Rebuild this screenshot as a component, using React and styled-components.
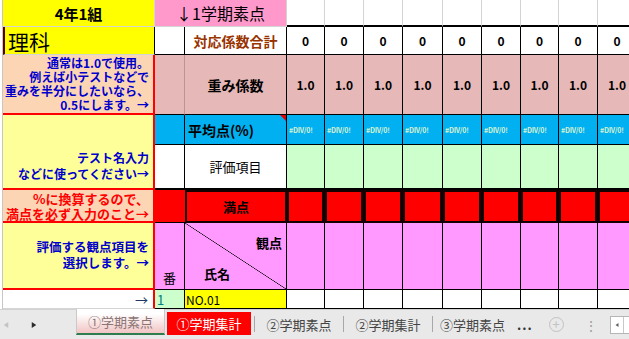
import React from 'react';
import styled, { createGlobalStyle } from 'styled-components';

const dataCols = [38, 39, 39, 40, 39, 39, 38, 39, 39];
const GRID = '#D4D4D4';

const GlobalStyle = createGlobalStyle`
  body {
    margin: 0;
    background: #fff;
    font-family: "Noto Sans CJK JP", "Noto Sans", sans-serif;
  }
`;

const Window = styled.div`
  width: 629px;
  height: 339px;
  overflow: hidden;
  display: flex;
  flex-direction: column;
`;

const Sheet = styled.div`
  display: grid;
  grid-template-columns: 3px 152px 30px 102px ${dataCols.map((w) => `${w}px`).join(' ')};
  grid-template-rows: 27px 28px 60px 30px 45px 33px 67px 19px;
  height: 309px;
  overflow: hidden;
  flex-shrink: 0;
`;

const Strip = styled.div`
  grid-row: span 8;
  border-right: 1px solid #c6c6c6;
  background: #fff;
`;

const Cell = styled.div`
  box-sizing: border-box;
  position: relative;
  display: flex;
  align-items: ${(p) => p.$v || 'center'};
  justify-content: ${(p) => p.$h || 'center'};
  padding: ${(p) => p.$pad || '0'};
  background: ${(p) => p.$bg || '#fff'};
  color: ${(p) => p.$color || '#000'};
  font-size: ${(p) => p.$fs || 12}px;
  font-weight: ${(p) => (p.$bold ? 700 : 400)};
  border-right: ${(p) => p.$r || '1px solid #000'};
  border-bottom: ${(p) => p.$b || '1px solid #000'};
  border-left: ${(p) => p.$l || 'none'};
  grid-column: ${(p) => (p.$cs ? `span ${p.$cs}` : 'auto')};
  grid-row: ${(p) => (p.$rs ? `span ${p.$rs}` : 'auto')};
  white-space: nowrap;
  overflow: hidden;
`;

const Note = styled(Cell)`
  flex-direction: column;
  align-items: flex-end;
  justify-content: ${(p) => p.$v || 'center'};
  text-align: right;
  font-weight: 700;
  line-height: ${(p) => p.$lh || 14}px;
  padding: ${(p) => p.$pad || '0 4px 0 0'};
`;

const Line = styled.span`
  display: block;
  height: 1lh;
`;

const Avg = styled(Cell)`
  &::after {
    content: '';
    position: absolute;
    top: 0;
    right: 0;
    border-top: 6px solid #e00000;
    border-left: 6px solid transparent;
  }
`;

const DivErr = styled(Cell)`
  font-size: 7px;
  color: #d8f0d0;
  letter-spacing: -0.2px;
`;

const Full = styled(Cell)`
  box-shadow: inset 0 0 0 2px #140000;
`;

const Corner = styled(Cell)`
  flex-direction: column;
  align-items: stretch;
  justify-content: space-between;
  padding: 12px 4px 7px 19px;
  background: linear-gradient(
      to top right,
      transparent calc(50% - 0.6px),
      #000 50%,
      transparent calc(50% + 0.6px)
    ),
    #ff99ff;
`;

const CornerText = styled.span`
  font-weight: 700;
  font-size: 13px;
  line-height: 16px;
  align-self: ${(p) => p.$side};
`;

const TabBar = styled.div`
  box-sizing: border-box;
  flex: 1;
  display: flex;
  align-items: stretch;
  background: #e9e9e9;
  border-top: 1px solid #d2d2d2;
  font-size: 13px;
  color: #444;
`;

const Nav = styled.div`
  width: 76px;
  display: flex;
  align-items: center;
  gap: 22px;
  padding-left: 3px;
  box-sizing: border-box;
`;

const SheetTab = styled.div`
  box-sizing: border-box;
  width: ${(p) => p.$w}px;
  display: flex;
  align-items: center;
  justify-content: center;
  white-space: nowrap;
`;

const ActiveTab = styled(SheetTab)`
  margin: -1px 0 4px;
  background: linear-gradient(#ffffff 20%, #f2c4c4);
  border: 1px solid #c9c9c9;
  border-top: none;
  border-bottom: 2px solid #2e7d4f;
  color: #8a7474;
`;

const RedTab = styled(SheetTab)`
  margin: 2px 0 4px 2px;
  background: #ff0000;
  color: #fff;
`;

const Sep = styled.div`
  width: 1px;
  margin: 6px 0 7px;
  background: #a8a8a8;
`;

const More = styled.div`
  display: flex;
  align-items: center;
  margin-left: 5px;
  font-weight: 700;
  color: #333;
  letter-spacing: 1px;
`;

const AddBtn = styled.div`
  align-self: center;
  margin-left: 16px;
  width: 13px;
  height: 13px;
  border: 1px solid #c2c2c2;
  border-radius: 50%;
  color: #c2c2c2;
  font-size: 13px;
  line-height: 12px;
  text-align: center;
`;

const VDots = styled.div`
  align-self: center;
  margin-left: 20px;
  color: #a0a0a0;
  font-size: 14px;
`;

const Scroll = styled.div`
  align-self: center;
  margin-left: 12px;
  height: 16px;
  flex: 1;
  display: flex;
  border: 1px solid #b5b5b5;
  border-right: none;
  background: #fff;
`;

const ScrollBtn = styled.div`
  width: 12px;
  display: flex;
  align-items: center;
  justify-content: center;
  border-right: 1px solid #c8c8c8;
`;

const Arrow = ({ dir, color, size = 8 }) => (
  <svg width={size} height={size + 2} viewBox="0 0 8 10">
    <polygon points={dir === 'left' ? '7,1 1,5 7,9' : '1,1 7,5 1,9'} fill={color} />
  </svg>
);

const gray = `1px solid ${GRID}`;
const red = '2px solid #ff0000';

export default function App() {
  return (
    <Window>
      <GlobalStyle />
      <Sheet>
        <Strip />

        {/* row 1 */}
        <Cell $bg="#ffff00" $fs={15} $bold $r={gray} $b={gray}>4年1組</Cell>
        <Cell $cs={2} $bg="#ff99cc" $fs={16} $r={gray} $b={gray}>↓1学期素点</Cell>
        {dataCols.map((_, i) => (
          <Cell key={`r1${i}`} $r={gray} $b="2px solid #000" />
        ))}

        {/* row 2 */}
        <Cell $bg="#ffff00" $fs={21} $h="flex-start" $pad="0 0 0 3px" $l="2px solid #5a0000" $b={gray}>理科</Cell>
        <Cell />
        <Cell $color="#993300" $bold $fs={14}>対応係数合計</Cell>
        {dataCols.map((_, i) => (
          <Cell key={`r2${i}`} $bold>0</Cell>
        ))}

        {/* row 3 */}
        <Note $bg="#fcd5b4" $color="#0000cc" $fs={12} $r={red} $b={red}>
          <Line>通常は1.0で使用。</Line>
          <Line>例えば小テストなどで</Line>
          <Line>重みを半分にしたいなら、</Line>
          <Line>0.5にします。→</Line>
        </Note>
        <Cell $bg="#e6b8b7" $r="1px solid #b99595" />
        <Cell $bg="#e6b8b7" $bold $fs={14}>重み係数</Cell>
        {dataCols.map((_, i) => (
          <Cell key={`r3${i}`} $bg="#e6b8b7" $bold>1.0</Cell>
        ))}

        {/* rows 4-5 */}
        <Note $rs={2} $bg="#ffff99" $color="#0000cc" $fs={12} $lh={16} $v="flex-end" $pad="0 4px 6px 0" $r={red} $b={red}>
          <Line>テスト名入力</Line>
          <Line>などに使ってください→</Line>
        </Note>
        <Cell $bg="#00b0f0" />
        <Avg $bg="#00b0f0" $bold $fs={14} $h="flex-start" $pad="0 0 0 3px">平均点(%)</Avg>
        {dataCols.map((_, i) => (
          <DivErr key={`r4${i}`} $bg="#00b0f0" $bold $h="flex-start" $pad="0 0 0 2px">#DIV/0!</DivErr>
        ))}

        <Cell $b="2px solid #000" />
        <Cell $fs={13} $b="2px solid #000">評価項目</Cell>
        {dataCols.map((_, i) => (
          <Cell key={`r5${i}`} $bg="#ccffcc" $b="2px solid #000" />
        ))}

        {/* row 6 */}
        <Note $bg="#fcd5b4" $color="#ff0000" $fs={13} $lh={15} $r={red} $b={red}>
          <Line>%に換算するので、</Line>
          <Line>満点を必ず入力のこと→</Line>
        </Note>
        <Cell $bg="#ff0000" $r="none" $b="1px solid #000" />
        <Full $bg="#ff0000" $bold $fs={13} $r="none" $b="none">満点</Full>
        {dataCols.map((_, i) => (
          <Full key={`r6${i}`} $bg="#ff0000" $r="1px solid #140000" $b="none" />
        ))}

        {/* row 7 */}
        <Note $bg="#ffff99" $color="#0000cc" $fs={12.5} $lh={16} $r={red} $b={red} $pad="0 4px 2px 0">
          <Line>評価する観点項目を</Line>
          <Line>選択します。→</Line>
        </Note>
        <Cell $bg="#ff99ff" $v="flex-end" $pad="0 0 2px" $fs={13}>番</Cell>
        <Corner>
          <CornerText $side="flex-end">観点</CornerText>
          <CornerText $side="flex-start">氏名</CornerText>
        </Corner>
        {dataCols.map((_, i) => (
          <Cell key={`r7${i}`} $bg="#ff99ff" />
        ))}

        {/* row 8 */}
        <Cell $h="flex-end" $pad="0 5px 0 0" $color="#1f3864" $fs={13} $r={red} $b={gray}>→</Cell>
        <Cell $bg="#ccffcc" $h="flex-start" $pad="0 0 0 2px" $color="#008080" $fs={13}>1</Cell>
        <Cell $bg="#ffff00" $h="flex-start" $pad="0 0 0 1px" $fs={12}>NO.01</Cell>
        {dataCols.map((_, i) => (
          <Cell key={`r8${i}`} />
        ))}
      </Sheet>

      <TabBar>
        <Nav>
          <Arrow dir="left" color="#c4c4c4" size={6} />
          <Arrow dir="right" color="#2b2b2b" size={6} />
        </Nav>
        <ActiveTab $w={89}>①学期素点</ActiveTab>
        <RedTab $w={84}>①学期集計</RedTab>
        <SheetTab $w={3} />
        <Sep />
        <SheetTab $w={88}>②学期素点</SheetTab>
        <Sep />
        <SheetTab $w={88}>②学期集計</SheetTab>
        <Sep />
        <SheetTab $w={79}>③学期素点</SheetTab>
        <More>...</More>
        <AddBtn>+</AddBtn>
        <VDots>⋮</VDots>
        <Scroll>
          <ScrollBtn>
            <Arrow dir="left" color="#606060" size={4} />
          </ScrollBtn>
        </Scroll>
      </TabBar>
    </Window>
  );
}
